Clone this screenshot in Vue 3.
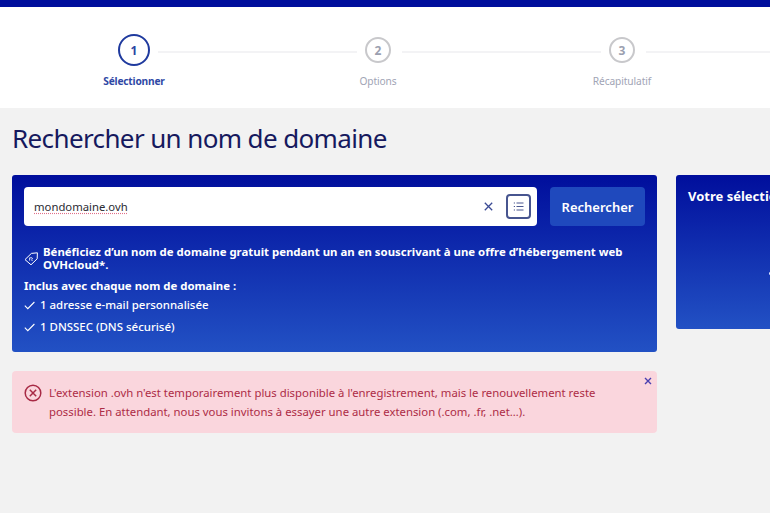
<script setup>
const steps = [
  { n: 1, label: 'Sélectionner', active: true },
  { n: 2, label: 'Options' },
  { n: 3, label: 'Récapitulatif' },
]
const perks = ['1 adresse e-mail personnalisée', '1 DNSSEC (DNS sécurisé)']
</script>

<template>
  <div class="page">
    <div class="topbar"></div>
    <nav class="stepper">
      <div class="track">
        <template v-for="s in steps" :key="s.n">
          <span class="circle" :class="{ active: s.active }">{{ s.n }}</span>
          <span class="line"></span>
        </template>
      </div>
      <div class="labels">
        <span v-for="s in steps" :key="s.n" class="label" :class="{ active: s.active }">{{ s.label }}</span>
      </div>
    </nav>
    <main class="content">
      <h1>Rechercher un nom de domaine</h1>
      <div class="columns">
        <div class="left">
          <section class="panel search">
            <div class="search-row">
              <div class="input">
                <span class="value">mondomaine.ovh</span>
                <svg class="clear" width="9" height="9" viewBox="0 0 9 9"><path d="M.8.8l7.4 7.4M8.2.8L.8 8.2" stroke="#3a4a94" stroke-width="1.3" fill="none"/></svg>
                <span class="listbtn">
                  <svg width="11" height="9" viewBox="0 0 11 9"><path d="M3.5 1h7M3.5 4.5h7M3.5 8h7M.8 1h1.2M.8 4.5h1.2M.8 8h1.2" stroke="#4a578f" stroke-width="1" fill="none"/></svg>
                </span>
              </div>
              <button class="go">Rechercher</button>
            </div>
            <div class="promo">
              <svg width="15" height="15" viewBox="0 0 15 15"><path d="M1 8.6L7.4 2.4l6-.6-.2 6-6.2 6z" stroke="#fff" stroke-width="1" fill="none" stroke-linejoin="round"/><path d="M5.6 9.6V6.8h2.4l.6 1-1.2 1 1.2 1.2" stroke="#fff" stroke-width=".8" fill="none"/></svg>
              <p>Bénéficiez d’un nom de domaine gratuit pendant un an en souscrivant à une offre d’hébergement web OVHcloud*.</p>
            </div>
            <div class="incl">Inclus avec chaque nom de domaine :</div>
            <ul>
              <li v-for="p in perks" :key="p">
                <svg width="11" height="9" viewBox="0 0 11 9"><path d="M.8 4.6l3 3L10.4 1" stroke="#fff" stroke-width="1.1" fill="none"/></svg>
                {{ p }}
              </li>
            </ul>
          </section>
          <section class="alert">
            <svg class="alert-icon" width="18" height="18" viewBox="0 0 18 18"><circle cx="9" cy="9" r="7.8" stroke="#a82a45" stroke-width="1.5" fill="none"/><path d="M5.8 5.8l6.4 6.4M12.2 5.8l-6.4 6.4" stroke="#a82a45" stroke-width="1.5" fill="none"/></svg>
            <p>L'extension .ovh n'est temporairement plus disponible à l'enregistrement, mais le renouvellement reste possible. En attendant, nous vous invitons à essayer une autre extension (.com, .fr, .net…).</p>
            <svg class="close" width="8" height="8" viewBox="0 0 8 8"><path d="M1 1l6 6M7 1L1 7" stroke="#4a3fb0" stroke-width="1.4" fill="none"/></svg>
          </section>
        </div>
        <aside class="panel side">
          <h2>Votre sélection</h2>
          <span class="dot"></span>
        </aside>
      </div>
    </main>
  </div>
</template>

<style>
html, body { margin: 0; background: #f2f2f2; overflow: hidden; }
</style>

<style scoped>
.page {
  width: 770px;
  height: 513px;
  overflow: hidden;
  background: #f2f2f2;
  font-family: "Noto Sans", "Open Sans", sans-serif;
}
.topbar { height: 7px; background: #000e9c; }
.stepper {
  height: 101px;
  background: #fff;
  box-sizing: border-box;
  padding-top: 26px;
  overflow: hidden;
}
.track {
  display: flex;
  align-items: center;
  height: 34px;
  padding-left: 118px;
  width: 900px;
}
.circle {
  flex: none;
  box-sizing: border-box;
  width: 26px;
  height: 26px;
  margin: 0 3px;
  border: 2px solid #c8c8cb;
  border-radius: 50%;
  display: flex;
  align-items: center;
  justify-content: center;
  font-size: 12px;
  font-weight: 700;
  color: #9b9fb0;
}
.circle.active {
  width: 32px;
  height: 32px;
  margin: 0;
  border: 2px solid #1f3a9e;
  color: #2c45a3;
}
.line {
  flex: none;
  width: 199px;
  height: 2px;
  margin: 3px 5px 0 8px;
  background: #f3f3f5;
}
.labels {
  display: grid;
  grid-template-columns: repeat(3, 244px);
  padding-left: 12px;
  margin-top: 7px;
}
.label {
  text-align: center;
  font-size: 10.2px;
  line-height: 14px;
  letter-spacing: -0.1px;
  color: #a1a4b5;
}
.label.active { color: #2f48a5; font-weight: 700; letter-spacing: -0.2px; }
.content { padding: 0 0 0 12px; }
h1 {
  margin: 0;
  padding-top: 13px;
  height: 53px;
  box-sizing: border-box;
  font-size: 26px;
  line-height: 34px;
  font-weight: 400;
  color: #16195e;
  letter-spacing: -0.62px;
  white-space: nowrap;
}
.columns { display: flex; gap: 19px; margin-top: 14px; }
.left { flex: none; width: 645px; }
.panel {
  background: linear-gradient(180deg, #000e9c 0%, #2251c4 100%);
  border-radius: 3px;
  color: #fff;
  box-sizing: border-box;
}
.search { height: 177px; padding: 12px; }
.search-row { display: flex; gap: 13px; width: 621px; }
.input {
  flex: none;
  width: 513px;
  height: 39px;
  box-sizing: border-box;
  background: #fff;
  border-radius: 4px;
  display: flex;
  align-items: center;
  padding: 0 6px 0 10px;
}
.value {
  flex: 1;
  font-size: 11.3px;
  color: #2b2b33;
  text-decoration: underline dotted #e0708a;
  text-underline-offset: 2px;
}
.clear { margin-right: 13px; }
.listbtn {
  width: 25px;
  height: 25px;
  box-sizing: border-box;
  border: 2px solid #47558f;
  border-radius: 4px;
  display: flex;
  align-items: center;
  justify-content: center;
}
.go {
  flex: none;
  width: 95px;
  height: 39px;
  border: 0;
  border-radius: 4px;
  background: #1f49bd;
  color: #fff;
  font-family: inherit;
  font-size: 13px;
  font-weight: 600;
  padding: 0;
}
.promo {
  display: flex;
  align-items: center;
  gap: 4px;
  margin-top: 19px;
  width: 606px;
}
.promo svg { flex: none; }
.promo p {
  margin: 0;
  font-size: 11.4px;
  line-height: 13px;
  font-weight: 700;
}
.incl { margin-top: 7px; font-size: 11.4px; line-height: 16px; font-weight: 700; }
ul { list-style: none; margin: 0; padding: 0; }
li {
  display: flex;
  align-items: center;
  gap: 5px;
  font-size: 11.45px;
  line-height: 22px;
  font-weight: 500;
}
.alert {
  position: relative;
  margin-top: 19px;
  height: 62px;
  box-sizing: border-box;
  background: #fad6dd;
  border-radius: 4px;
  display: flex;
  gap: 7px;
  padding: 12px 30px 0 12px;
  color: #ad2c46;
}
.alert-icon { flex: none; margin-top: 1px; }
.alert p { margin: 0; font-size: 11.35px; line-height: 19px; }
.close { position: absolute; top: 6px; right: 5px; }
.side { flex: none; width: 200px; height: 154px; padding: 12px; }
h2 { margin: 0; font-size: 13px; line-height: 19px; font-weight: 700; }
.dot { display: block; width: 3px; height: 3px; margin: 66px 0 0 81px; background: #e6ebff; border-radius: 50%; }
</style>
